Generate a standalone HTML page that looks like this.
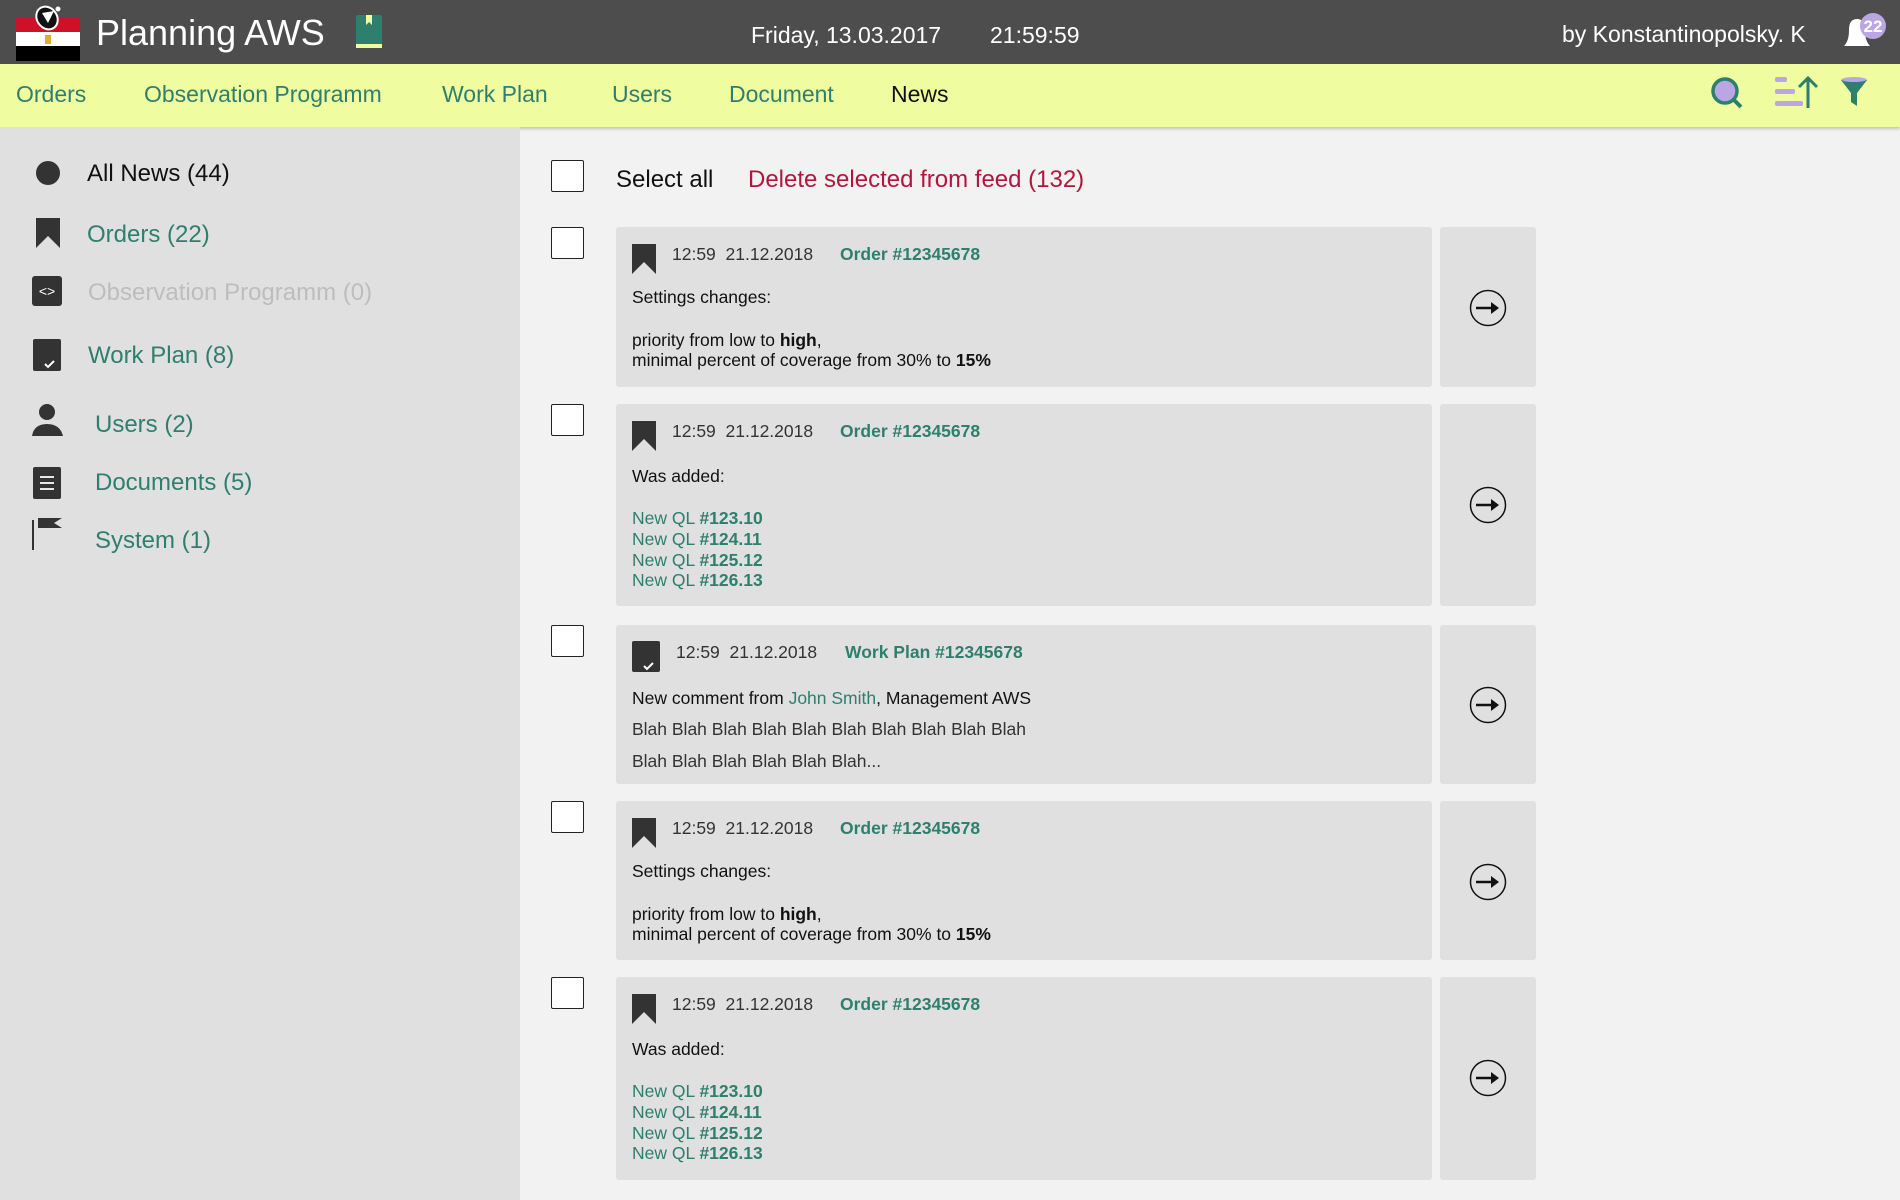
<!DOCTYPE html>
<html><head><meta charset="utf-8"><style>
*{margin:0;padding:0;box-sizing:border-box}
body{width:1900px;height:1200px;overflow:hidden;background:#f2f2f2;font-family:"Liberation Sans",sans-serif;position:relative}
.a{position:absolute;white-space:nowrap}
.t{color:#2e7f6e}
.hd{position:absolute;left:0;top:0;width:1900px;height:64px;background:#4d4d4d}
.nv{position:absolute;left:0;top:64px;width:1900px;height:63px;background:#effda0;box-shadow:0 2px 3px rgba(0,0,0,.2)}
.nv .a{font-size:23px;line-height:28px;top:16px;color:#2e7f6e}
.sb{position:absolute;left:0;top:127px;width:520px;height:1073px;background:#e0e0e0}
.sb .a{font-size:24px;line-height:30px}
.cb{position:absolute;left:551px;width:33px;height:32px;background:#fff;border:1.5px solid #222;border-radius:2px}
.card{position:absolute;left:616px;width:816px;background:#e0e0e0;border-radius:3px}
.arr{position:absolute;left:1440px;width:96px;background:#e0e0e0;border-radius:3px}
.card .a{font-size:17.5px;line-height:22px;color:#111}
.card .h{color:#333}
.card .g{color:#333}
</style></head><body>
<div class="hd">
<svg class="a" style="left:16px;top:4px" width="66" height="58" viewBox="0 0 66 58">
<rect x="0" y="14" width="64" height="14" fill="#ce1126"/><rect x="0" y="28" width="64" height="14" fill="#fff"/><rect x="0" y="42" width="64" height="15" fill="#000"/>
<rect x="29" y="31" width="6" height="9" fill="#e0a93a"/>
<ellipse cx="31" cy="14" rx="10" ry="12" transform="rotate(-35 31 14)" fill="#111" stroke="#fff" stroke-width="2"/>
<path d="M26 9 L38 7 L32 19 Z" fill="#fff"/><circle cx="42" cy="5" r="2.5" fill="#fff"/>
</svg>
<div class="a" style="left:96px;top:12px;font-size:36px;line-height:42px;color:#fff">Planning AWS</div>
<svg class="a" style="left:355px;top:14px" width="30" height="36"><rect x="1" y="1" width="26" height="32" rx="2" fill="#2e7f6e"/><rect x="1" y="30" width="26" height="4" fill="#effda0"/><path d="M11 1 V11 L14 8 L17 11 V1Z" fill="#effda0"/></svg>
<div class="a" style="left:751px;top:21px;font-size:23px;line-height:28px;color:#fff">Friday, 13.03.2017</div>
<div class="a" style="left:990px;top:21px;font-size:23px;line-height:28px;color:#fff">21:59:59</div>
<div class="a" style="left:1562px;top:20px;font-size:23px;line-height:28px;color:#fff">by Konstantinopolsky. K</div>
<svg class="a" style="left:1840px;top:10px" width="48" height="40"><path d="M4 36 Q9 31 9 20 Q9 9 17 9 Q25 9 25 20 Q25 31 30 36Z" fill="#fff"/><circle cx="33" cy="16" r="13" fill="#b9a6e3"/><text x="33" y="22" font-size="17" fill="#fff" text-anchor="middle" font-family="Liberation Sans" font-weight="bold">22</text></svg>
</div>
<div class="nv">
<div class="a" style="left:16px">Orders</div>
<div class="a" style="left:144px">Observation Programm</div>
<div class="a" style="left:442px">Work Plan</div>
<div class="a" style="left:612px">Users</div>
<div class="a" style="left:729px">Document</div>
<div class="a" style="left:891px;color:#111">News</div>
<svg class="a" style="left:1710px;top:12px" width="36" height="36"><circle cx="15" cy="15" r="12" fill="#b9a6e3" stroke="#2e7f6e" stroke-width="3.5"/><path d="M24 24 L31 31" stroke="#2e7f6e" stroke-width="4"/></svg>
<svg class="a" style="left:1774px;top:10px" width="46" height="36"><rect x="1" y="3" width="12" height="5" rx="2" fill="#b9a6e3"/><rect x="1" y="15" width="20" height="5" rx="2" fill="#b9a6e3"/><rect x="1" y="27" width="28" height="5" rx="2" fill="#b9a6e3"/><path d="M34 34 V4 M25 13 L34 4 L43 13" stroke="#2e7f6e" stroke-width="3" fill="none"/></svg>
<svg class="a" style="left:1839px;top:12px" width="30" height="32"><ellipse cx="15" cy="4" rx="13" ry="3" fill="#b9a6e3"/><path d="M2 4 H28 L18 17 V30 L12 26 V17Z" fill="#2e7f6e"/><ellipse cx="15" cy="4" rx="12" ry="2" fill="#b9a6e3"/></svg>
</div>
<div class="sb">
<svg class="a" style="left:35px;top:33px" width="26" height="26"><circle cx="13" cy="13" r="12" fill="#333"/></svg>
<div class="a" style="left:87px;top:32px;color:#111">All News (44)</div>
<svg class="a" style="left:35px;top:91px" width="26" height="30"><path d="M1 0 H25 V30 L13 18 L1 30Z" fill="#333"/></svg>
<div class="a t" style="left:87px;top:93px">Orders (22)</div>
<svg class="a" style="left:32px;top:149px" width="30" height="30"><rect width="30" height="30" rx="3" fill="#333"/><text x="15" y="20" font-size="14" fill="#fff" text-anchor="middle" font-family="Liberation Sans">&lt;&gt;</text></svg>
<div class="a" style="left:88px;top:151px;color:#bdbdbd">Observation Programm (0)</div>
<svg class="a" style="left:33px;top:212px" width="29" height="32"><rect width="28" height="32" rx="2" fill="#333"/><path d="M12 25 L15 28 L21 22" stroke="#fff" stroke-width="2" fill="none"/></svg>
<div class="a t" style="left:88px;top:214px">Work Plan (8)</div>
<svg class="a" style="left:32px;top:276px" width="31" height="33"><circle cx="15" cy="9" r="8" fill="#333"/><path d="M0 33 Q2 21 15 21 Q28 21 31 33Z" fill="#333"/></svg>
<div class="a t" style="left:95px;top:283px">Users (2)</div>
<svg class="a" style="left:33px;top:340px" width="29" height="32"><rect width="28" height="32" rx="2" fill="#333"/><path d="M7 10 H21 M7 16 H21 M7 22 H21" stroke="#fff" stroke-width="1.8"/></svg>
<div class="a t" style="left:95px;top:341px">Documents (5)</div>
<svg class="a" style="left:32px;top:391px" width="32" height="32"><path d="M1 2 V32" stroke="#333" stroke-width="2"/><path d="M6 0 H30 L22 5 L30 10 H6Z" fill="#333"/></svg>
<div class="a t" style="left:95px;top:399px">System (1)</div>
</div>

<div class="cb" style="top:160px"></div>
<div class="a" style="left:616px;top:165px;font-size:24px;line-height:30px;color:#111">Select all</div>
<div class="a" style="left:748px;top:165px;font-size:24px;line-height:30px;color:#b0173d">Delete selected from feed (132)</div>

<!-- card1 -->
<div class="cb" style="top:227px"></div>
<div class="card" style="top:227px;height:160px">
<svg class="a" style="left:16px;top:17px" width="24" height="30"><path d="M0 0H24V30L12 18L0 30Z" fill="#333"/></svg>
<div class="a h" style="left:56px;top:16px">12:59&nbsp; 21.12.2018</div>
<div class="a t" style="left:224px;top:16px;font-weight:bold;color:#2e7f6e">Order #12345678</div>
<div class="a" style="left:16px;top:59px">Settings changes:</div>
<div class="a" style="left:16px;top:102px">priority from low to <b>high</b>,</div>
<div class="a" style="left:16px;top:122px">minimal percent of coverage from 30% to <b>15%</b></div>
</div>
<div class="arr" style="top:227px;height:160px"><svg class="a" style="left:29px;top:62px" width="38" height="38"><circle cx="19" cy="19" r="17.5" fill="none" stroke="#111" stroke-width="1.5"/><path d="M7 19H24" stroke="#111" stroke-width="2.5"/><path d="M22 13L30 19L22 25Z" fill="#111"/></svg></div>

<!-- card2 -->
<div class="cb" style="top:404px"></div>
<div class="card" style="top:404px;height:202px">
<svg class="a" style="left:16px;top:17px" width="24" height="30"><path d="M0 0H24V30L12 18L0 30Z" fill="#333"/></svg>
<div class="a h" style="left:56px;top:16px">12:59&nbsp; 21.12.2018</div>
<div class="a t" style="left:224px;top:16px;font-weight:bold;color:#2e7f6e">Order #12345678</div>
<div class="a" style="left:16px;top:61px">Was added:</div>
<div class="a t" style="left:16px;top:103px;color:#2e7f6e">New QL <b>#123.10</b></div>
<div class="a t" style="left:16px;top:124px;color:#2e7f6e">New QL <b>#124.11</b></div>
<div class="a t" style="left:16px;top:145px;color:#2e7f6e">New QL <b>#125.12</b></div>
<div class="a t" style="left:16px;top:165px;color:#2e7f6e">New QL <b>#126.13</b></div>
</div>
<div class="arr" style="top:404px;height:202px"><svg class="a" style="left:29px;top:82px" width="38" height="38"><circle cx="19" cy="19" r="17.5" fill="none" stroke="#111" stroke-width="1.5"/><path d="M7 19H24" stroke="#111" stroke-width="2.5"/><path d="M22 13L30 19L22 25Z" fill="#111"/></svg></div>

<!-- card3 -->
<div class="cb" style="top:625px"></div>
<div class="card" style="top:625px;height:159px">
<svg class="a" style="left:16px;top:16px" width="29" height="32"><rect width="28" height="31" rx="2" fill="#333"/><path d="M12 25 L15 28 L21 22" stroke="#fff" stroke-width="2" fill="none"/></svg>
<div class="a h" style="left:60px;top:16px">12:59&nbsp; 21.12.2018</div>
<div class="a t" style="left:229px;top:16px;font-weight:bold;color:#2e7f6e">Work Plan #12345678</div>
<div class="a" style="left:16px;top:62px">New comment from <span style="color:#2e7f6e">John Smith</span>, Management AWS</div>
<div class="a g" style="left:16px;top:93px">Blah Blah Blah Blah Blah Blah Blah Blah Blah Blah</div>
<div class="a g" style="left:16px;top:125px">Blah Blah Blah Blah Blah Blah...</div>
</div>
<div class="arr" style="top:625px;height:159px"><svg class="a" style="left:29px;top:61px" width="38" height="38"><circle cx="19" cy="19" r="17.5" fill="none" stroke="#111" stroke-width="1.5"/><path d="M7 19H24" stroke="#111" stroke-width="2.5"/><path d="M22 13L30 19L22 25Z" fill="#111"/></svg></div>

<!-- card4 -->
<div class="cb" style="top:801px"></div>
<div class="card" style="top:801px;height:159px">
<svg class="a" style="left:16px;top:17px" width="24" height="30"><path d="M0 0H24V30L12 18L0 30Z" fill="#333"/></svg>
<div class="a h" style="left:56px;top:16px">12:59&nbsp; 21.12.2018</div>
<div class="a t" style="left:224px;top:16px;font-weight:bold;color:#2e7f6e">Order #12345678</div>
<div class="a" style="left:16px;top:59px">Settings changes:</div>
<div class="a" style="left:16px;top:102px">priority from low to <b>high</b>,</div>
<div class="a" style="left:16px;top:122px">minimal percent of coverage from 30% to <b>15%</b></div>
</div>
<div class="arr" style="top:801px;height:159px"><svg class="a" style="left:29px;top:62px" width="38" height="38"><circle cx="19" cy="19" r="17.5" fill="none" stroke="#111" stroke-width="1.5"/><path d="M7 19H24" stroke="#111" stroke-width="2.5"/><path d="M22 13L30 19L22 25Z" fill="#111"/></svg></div>

<!-- card5 -->
<div class="cb" style="top:977px"></div>
<div class="card" style="top:977px;height:203px">
<svg class="a" style="left:16px;top:17px" width="24" height="30"><path d="M0 0H24V30L12 18L0 30Z" fill="#333"/></svg>
<div class="a h" style="left:56px;top:16px">12:59&nbsp; 21.12.2018</div>
<div class="a t" style="left:224px;top:16px;font-weight:bold;color:#2e7f6e">Order #12345678</div>
<div class="a" style="left:16px;top:61px">Was added:</div>
<div class="a t" style="left:16px;top:103px;color:#2e7f6e">New QL <b>#123.10</b></div>
<div class="a t" style="left:16px;top:124px;color:#2e7f6e">New QL <b>#124.11</b></div>
<div class="a t" style="left:16px;top:145px;color:#2e7f6e">New QL <b>#125.12</b></div>
<div class="a t" style="left:16px;top:165px;color:#2e7f6e">New QL <b>#126.13</b></div>
</div>
<div class="arr" style="top:977px;height:203px"><svg class="a" style="left:29px;top:82px" width="38" height="38"><circle cx="19" cy="19" r="17.5" fill="none" stroke="#111" stroke-width="1.5"/><path d="M7 19H24" stroke="#111" stroke-width="2.5"/><path d="M22 13L30 19L22 25Z" fill="#111"/></svg></div>
</body></html>
